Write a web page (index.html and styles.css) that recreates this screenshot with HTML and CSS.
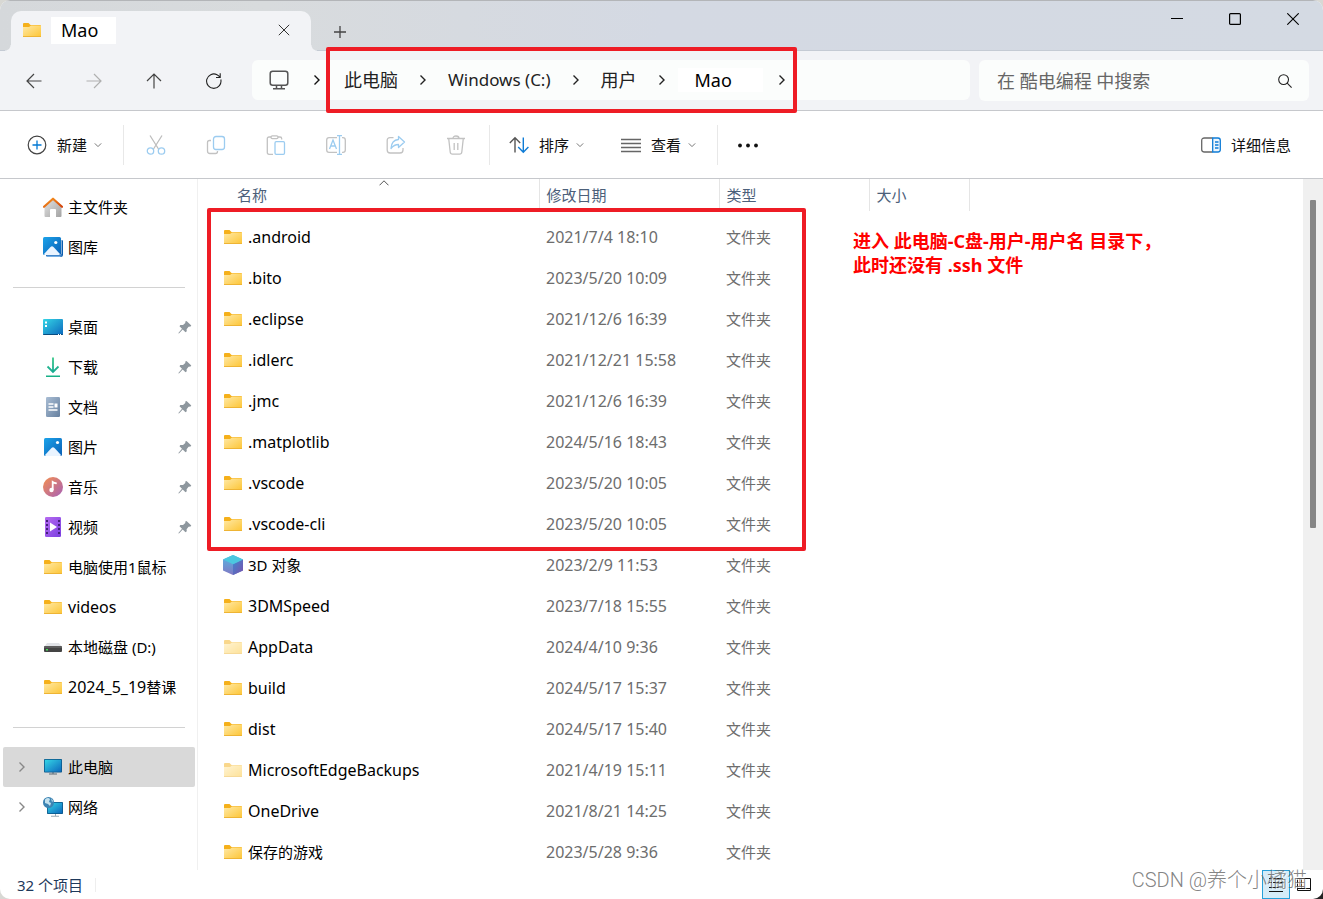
FILE: index.html
```html
<!DOCTYPE html>
<html lang="zh-CN">
<head>
<meta charset="utf-8">
<title>Mao</title>
<link rel="stylesheet" href="styles.css">
</head>
<body>
<svg class="sprite" aria-hidden="true">
  <defs>
    <linearGradient id="g-folder" x1="0" y1="0" x2="1" y2="1"><stop offset="0" stop-color="#ffe9a6"/><stop offset="1" stop-color="#fdc535"/></linearGradient>
    <linearGradient id="g-blue" x1="0" y1="0" x2="1" y2="1"><stop offset="0" stop-color="#1ca3ea"/><stop offset="1" stop-color="#0a5fb5"/></linearGradient>
    <linearGradient id="g-cyan" x1="0" y1="0" x2="1" y2="1"><stop offset="0" stop-color="#35d6e6"/><stop offset="1" stop-color="#0c68bd"/></linearGradient>
    <linearGradient id="g-home" x1="0" y1="0" x2="1" y2="1"><stop offset="0" stop-color="#e4e4e4"/><stop offset="1" stop-color="#a3a3a3"/></linearGradient>
    <linearGradient id="g-roof" x1="0" y1="0" x2="1" y2="1"><stop offset="0" stop-color="#fa9b22"/><stop offset="1" stop-color="#d2420a"/></linearGradient>
    <linearGradient id="g-down" x1="0" y1="0" x2="0" y2="20" gradientUnits="userSpaceOnUse"><stop offset="0" stop-color="#3ac98a"/><stop offset="1" stop-color="#0ea094"/></linearGradient>
    <linearGradient id="g-doc" x1="0" y1="0" x2="1" y2="1"><stop offset="0" stop-color="#a9bdd4"/><stop offset="1" stop-color="#66809f"/></linearGradient>
    <linearGradient id="g-music" x1="0" y1="0" x2="1" y2="1"><stop offset="0" stop-color="#f58f4f"/><stop offset="1" stop-color="#a660b8"/></linearGradient>
    <linearGradient id="g-video" x1="0" y1="0" x2="1" y2="1"><stop offset="0" stop-color="#b66bf0"/><stop offset="1" stop-color="#7a3fe0"/></linearGradient>
    <linearGradient id="g-cube" x1="0" y1="0" x2="0" y2="1"><stop offset="0" stop-color="#55b8e2"/><stop offset="1" stop-color="#8177c4"/></linearGradient>
    <linearGradient id="g-cube2" x1="0" y1="0" x2="1" y2="1"><stop offset="0" stop-color="#3f86cf"/><stop offset="1" stop-color="#7b51ad"/></linearGradient>
  </defs>
  <symbol id="folder" viewBox="0 0 20 20"><path d="M1 4q0-1 1-1h4.500l2 2H18q1 0 1 1v2H1z" fill="#f5b01a"/><path d="M1 7h6l2-1.400h10V16q0 1-1 1H2q-1 0-1-1z" fill="url(#g-folder)"/><path d="M1 16.500h18" stroke="#eeb434" stroke-width="1"/></symbol>
  <symbol id="home" viewBox="0 0 20 20"><path d="M10 1.500 18.500 9v10q0 1-1 1H13v-7q0-1-1-1H8q-1 0-1 1v7H2.500q-1 0-1-1V9z" fill="url(#g-home)"/><path d="M1 9.800 10 1.700l9 8.100" fill="none" stroke="url(#g-roof)" stroke-width="2.200" stroke-linecap="round" stroke-linejoin="round"/></symbol>
  <symbol id="gallery" viewBox="0 0 20 20"><path d="M3 18h14q1.500 0 1.500-1.500V3q1.500 0 1.500 1v13.500q0 2.500-2.500 2.500H5q-2 0-2-2z" fill="#0c5dae"/><path d="M4 20h13l2-1.500H4z" fill="#76aee3"/><rect width="18" height="18" rx="1.500" fill="url(#g-blue)"/><path d="m1 17 6.500-7q1.500-1.500 3 0L17 17q-.5 1-1 1H2q-.5 0-1-1z" fill="#eaf4ff"/><circle cx="12.800" cy="5.500" r="1.600" fill="#fff"/></symbol>
  <symbol id="pictures" viewBox="0 0 20 20"><rect x="1" y="1" width="18" height="18" rx="1.500" fill="url(#g-blue)"/><path d="m2 18 6.500-7q1.500-1.500 3 0L18 18q-.5 1-1 1H3q-.5 0-1-1z" fill="#eaf4ff"/><circle cx="14.500" cy="5.500" r="1.600" fill="#fff"/></symbol>
  <symbol id="desktop" viewBox="0 0 20 20"><rect y="2" width="20" height="16" rx="1" fill="url(#g-cyan)"/><path d="M0 17h20q0 1-1 1H1q-1 0-1-1z" fill="#094d80"/><path d="M2 4.500h2v2H2zm0 3.500h2v2H2z" fill="#fff"/><path d="M15 17.500h1m1 0h1" stroke="#fff"/></symbol>
  <symbol id="download" viewBox="0 0 20 20"><path d="M10 .5v14M4.500 9.500l5.500 5.500 5.500-5.500" fill="none" stroke="url(#g-down)" stroke-width="1.800"/><path d="M3 18.500h14v1.800H3z" fill="#18b087"/></symbol>
  <symbol id="document" viewBox="0 0 20 20"><rect x="3" width="14" height="20" rx="1.300" fill="url(#g-doc)"/><path d="M5.500 7h5m-5 3h5m-5 3h9" stroke="#fff" stroke-width="1.300"/><path d="M11.500 6.500h3v4h-3z" fill="#fff"/></symbol>
  <symbol id="music" viewBox="0 0 20 20"><circle cx="10" cy="10" r="10" fill="url(#g-music)"/><circle cx="8.500" cy="13" r="2.200" fill="#fff"/><path d="M9.700 13V5q2 1.500 4 1.200" fill="none" stroke="#fff" stroke-width="1.800"/></symbol>
  <symbol id="video" viewBox="0 0 20 20"><rect x="2" width="16" height="20" rx="1.300" fill="url(#g-video)"/><path d="M3 3h2v2H3zm0 4h2v2H3zm0 4h2v2H3zm0 4h2v2H3zM15 3h2v2h-2zm0 4h2v2h-2zm0 4h2v2h-2zm0 4h2v2h-2z" fill="#44207a"/><path d="m7 5.500 7 4.500-7 4.500z" fill="#fff"/></symbol>
  <symbol id="disk" viewBox="0 0 20 20"><path d="M4 6h12l3 4H1z" fill="#e1e3e7"/><rect x="1" y="9" width="18" height="6" rx="1" fill="#444"/><path d="M1 10h18" stroke="#777"/><path d="M3 12h2v1.500H3z" fill="#4be05a"/></symbol>
  <symbol id="pc" viewBox="0 0 20 20"><path d="M9 15h2v2H9z" fill="#9aa4ad"/><path d="M6 16.500h8v1H6z" fill="#5b6872"/><rect x="1" y="2" width="18" height="13.500" rx=".8" fill="#0b5789"/><rect x="1.800" y="2.800" width="16.400" height="11.900" fill="url(#g-cyan)"/></symbol>
  <symbol id="network" viewBox="0 0 20 20"><path d="M12 16h1v3h-1zM8 18.800h8v1H8z" fill="#98a8b4"/><rect x="4" y="5" width="16" height="12" rx=".8" fill="#0b5789"/><rect x="4.800" y="5.800" width="14.400" height="10.400" fill="url(#g-cyan)"/><circle cx="5.500" cy="5.500" r="5.500" fill="#3d84b3"/><path d="M2 2.500Q5 0 7 2L6 5l2 1-1 3-2-2L2 6zM8 1l2 3-1 1z" fill="#c4e2ef"/></symbol>
  <symbol id="cube" viewBox="0 0 20 20"><path d="M10 0 20 4.500v11L10 20 0 15.500v-11z" fill="url(#g-cube)"/><path d="m10 9.200 10-4.700v11L10 20z" fill="url(#g-cube2)"/><path d="M10 0 20 4.500 10 9.200 0 4.500z" fill="#4cc7df"/></symbol>
  <symbol id="pin" viewBox="0 0 14 14"><path d="M8.500 1 13.300 5.500 12.600 6.600 10.600 6.700 8.600 9.300 8.800 11.300 7.500 12.200 4.700 9.500 1.200 13.200.4 13.500.6 12.700 4 8.800 1.500 6.300 2.300 5 5 5 7.300 3 7.300 1.500z" fill="#8e979e"/></symbol>
  <symbol id="next" viewBox="0 0 8 12"><path d="m1.500 1.500 4.500 4.500-4.500 4.500" fill="none" stroke="currentColor" stroke-width="1.400"/></symbol>
  <symbol id="caret" viewBox="0 0 8 8"><path d="m.8 2.400 3.200 3.200 3.200-3.200" fill="none" stroke="#777" stroke-width="1"/></symbol>
</svg>

<div class="window">
  <header class="titlebar">
    <div class="tab">
      <svg class="icon"><use href="#folder"/></svg>
      <span class="tab-name">Mao</span>
      <button class="tab-close" aria-label="关闭标签页"><svg width="12" height="12" viewBox="0 0 12 12" fill="none" stroke="#333"><path d="m.8.8 10.400 10.400m0-10.400L.8 11.200"/></svg></button>
    </div>
    <button class="tab-add" aria-label="新标签页"><svg width="12" height="12" viewBox="0 0 12 12" fill="none" stroke="#444" stroke-width="1.300"><path d="M6 0v12M0 6h12"/></svg></button>
    <div class="window-buttons">
      <button aria-label="最小化"><svg width="12" height="12" viewBox="0 0 12 12" stroke="#000"><path d="M0 5.500h12"/></svg></button>
      <button aria-label="最大化"><svg width="12" height="12" viewBox="0 0 12 12" fill="none" stroke="#000" stroke-width="1.200"><rect x=".6" y=".6" width="10.800" height="10.800" rx="1"/></svg></button>
      <button aria-label="关闭"><svg width="12" height="12" viewBox="0 0 12 12" stroke="#000" stroke-width="1.100"><path d="m.3.3 11.400 11.400m0-11.400L.3 11.700"/></svg></button>
    </div>
  </header>

  <nav class="navbar" aria-label="地址">
    <button class="square" aria-label="后退"><svg width="16" height="16" viewBox="0 0 16 16" fill="none" stroke="#444" stroke-width="1.200"><path d="M15.500 8H1m7-7L1 8l7 7"/></svg></button>
    <button class="square" aria-label="前进"><svg width="16" height="16" viewBox="0 0 16 16" fill="none" stroke="#b0b0b0" stroke-width="1.200"><path d="M.5 8H15M8 1l7 7-7 7"/></svg></button>
    <button class="square" aria-label="向上"><svg width="16" height="16" viewBox="0 0 16 16" fill="none" stroke="#444" stroke-width="1.200"><path d="M8 15.500V1M1 8l7-7 7 7"/></svg></button>
    <button class="square" aria-label="刷新"><svg width="16" height="16" viewBox="0 0 16 16" fill="none" stroke="#222" stroke-width="1.100"><path d="M14.800 6.500A7.200 7.200 0 1 1 11 1.700q2 1 3 2.700M14.200.3v4.200H10"/></svg></button>
    <div class="address">
      <button class="location" aria-label="位置"><svg width="20" height="20" viewBox="0 0 20 20" fill="none" stroke="#555" stroke-width="1.500"><rect x="1.200" y="1.200" width="17.600" height="14" rx="2.500"/><path d="M7.500 15.500v3m5-3v3M4 18.700h12"/></svg></button>
      <svg class="next"><use href="#next"/></svg>
      <div class="crumbs">
        <a href="#">此电脑</a><svg class="next"><use href="#next"/></svg>
        <a href="#" class="drive">Windows (C:)</a><svg class="next"><use href="#next"/></svg>
        <a href="#">用户</a><svg class="next"><use href="#next"/></svg>
        <a href="#" class="current">Mao</a><svg class="next last"><use href="#next"/></svg>
      </div>
    </div>
    <label class="search">
      <input type="text" aria-label="搜索" placeholder="在 酷电编程 中搜索">
      <svg width="14" height="14" viewBox="0 0 14 14" fill="none" stroke="#222" stroke-width="1.100"><circle cx="5.600" cy="5.600" r="4.900"/><path d="m9.200 9.200 4.400 4.400"/></svg>
    </label>
  </nav>

  <div class="toolbar">
    <button class="tool new"><svg class="icon" viewBox="0 0 20 20" fill="none"><circle cx="10" cy="10" r="8.800" stroke="#444" stroke-width="1.200"/><path d="M10 5.500v9M5.500 10h9" stroke="#0078d4" stroke-width="1.300"/></svg>新建<svg class="caret"><use href="#caret"/></svg></button>
    <div class="edit-tools">
      <button class="square" aria-label="剪切"><svg class="icon" viewBox="0 0 20 20" fill="none" stroke-width="1.300"><path d="M4 .5 12.500 14M16 .5 7.500 14" stroke="#bdbdbd"/><circle cx="4.500" cy="16" r="3.200" stroke="#9cccf0"/><circle cx="15.500" cy="16" r="3.200" stroke="#9cccf0"/></svg></button>
      <button class="square" aria-label="复制"><svg class="icon" viewBox="0 0 20 20" fill="none" stroke-width="1.300"><path d="M5 5.500H3.500q-2 0-2 2V16q0 2.500 2.500 2.500h5.500q2 0 2-2V16" stroke="#c2c2c2"/><rect x="7.500" y="1.500" width="11" height="13" rx="2.500" stroke="#9cccf0"/></svg></button>
      <button class="square" aria-label="粘贴"><svg class="icon" viewBox="0 0 20 20" fill="none" stroke-width="1.300"><path d="M7 19.300H3q-1.700 0-1.700-1.700V3.500Q1.300 2 3 2h2m7 0h2q1.700 0 1.700 1.700v.8" stroke="#c2c2c2"/><rect x="5" y=".8" width="7" height="2.800" rx="1.300" stroke="#c2c2c2"/><rect x="9" y="6.700" width="9.500" height="12.600" rx="1.200" stroke="#9cccf0"/></svg></button>
      <button class="square" aria-label="重命名"><svg class="icon" viewBox="0 0 20 20" fill="none" stroke-width="1.300"><path d="M11 2.700H3Q.7 2.700.7 5v10q0 2.300 2.300 2.300h8M16 2.700h1q2.300 0 2.300 2.300v10q0 2.300-2.300 2.300h-1" stroke="#c2c2c2"/><path d="m3.500 14 3.500-9 3.500 9M4.800 11h4.500M11 .7h5M11 19.300h5M13.500.7v18.600" stroke="#9cccf0"/></svg></button>
      <button class="square" aria-label="共享"><svg class="icon" viewBox="0 0 20 20" fill="none" stroke-width="1.300" stroke-linejoin="round"><path d="M7.500 2.700H4Q1.200 2.700 1.200 5.500V15q0 3 3 3H14q3 0 3-3v-2" stroke="#c2c2c2"/><path d="M12.500 1.500 18.500 7l-6 5.500V9.500Q8 9.500 5 13.500 5.500 5 12.500 4.500z" stroke="#9cccf0"/></svg></button>
      <button class="square" aria-label="删除"><svg class="icon" viewBox="0 0 20 20" fill="none" stroke="#c2c2c2" stroke-width="1.300"><path d="M1 3.500h18M7 3.500q0-2.500 3-2.500t3 2.500M2.700 3.500 4.200 17q.2 2.200 2.300 2.200h7q2.100 0 2.300-2.200l1.500-13.500M8.200 8v7m3.600-7v7"/></svg></button>
    </div>
    <button class="tool sort"><svg class="icon" viewBox="0 0 20 20" fill="none" stroke-width="1.400"><path d="M6 17.500V3M.8 8 6 2.800 11.200 8" stroke="#555"/><path d="M14.300 2.500V17M9.200 12l5.100 5.200 5.100-5.200" stroke="#0f7cd6"/></svg>排序<svg class="caret"><use href="#caret"/></svg></button>
    <button class="tool view"><svg class="icon" viewBox="0 0 20 20" stroke="#666" stroke-width="1.300"><path d="M0 4.500h20M0 8.500h20M0 12.500h20M0 16.500h20"/></svg>查看<svg class="caret"><use href="#caret"/></svg></button>
    <button class="square" aria-label="更多"><svg class="icon" viewBox="0 0 20 20" fill="#111"><circle cx="2" cy="10.500" r="1.900"/><circle cx="10" cy="10.500" r="1.900"/><circle cx="18" cy="10.500" r="1.900"/></svg></button>
    <button class="tool details"><svg class="icon" viewBox="0 0 20 20" fill="none" stroke-width="1.300"><path d="M11.500 3H3.500Q.7 3 .7 5.500v9Q.7 17 3.500 17h8" stroke="#666"/><path d="M11.700 3H17q2.300 0 2.300 2.500v9q0 2.500-2.300 2.500h-5.300zM14 7h3.500M14 10h3.500M14 13h3.500" fill="#eef6fd" stroke="#0f7cd6"/></svg>详细信息</button>
  </div>

  <div class="content">
    <aside class="sidebar">
      <a href="#"><svg class="icon"><use href="#home"/></svg>主文件夹</a>
      <a href="#"><svg class="icon"><use href="#gallery"/></svg>图库</a>
      <hr>
      <a href="#"><svg class="icon"><use href="#desktop"/></svg>桌面<svg class="pin"><use href="#pin"/></svg></a>
      <a href="#"><svg class="icon"><use href="#download"/></svg>下载<svg class="pin"><use href="#pin"/></svg></a>
      <a href="#"><svg class="icon"><use href="#document"/></svg>文档<svg class="pin"><use href="#pin"/></svg></a>
      <a href="#"><svg class="icon"><use href="#pictures"/></svg>图片<svg class="pin"><use href="#pin"/></svg></a>
      <a href="#"><svg class="icon"><use href="#music"/></svg>音乐<svg class="pin"><use href="#pin"/></svg></a>
      <a href="#"><svg class="icon"><use href="#video"/></svg>视频<svg class="pin"><use href="#pin"/></svg></a>
      <a href="#"><svg class="icon"><use href="#folder"/></svg>电脑使用1鼠标</a>
      <a href="#"><svg class="icon"><use href="#folder"/></svg><span class="latin">videos</span></a>
      <a href="#"><svg class="icon"><use href="#disk"/></svg>本地磁盘 (D:)</a>
      <a href="#"><svg class="icon"><use href="#folder"/></svg><span><span class="latin">2024_5_19</span>替课</span></a>
      <hr>
      <a href="#" class="expandable selected"><svg class="next"><use href="#next"/></svg><svg class="icon"><use href="#pc"/></svg>此电脑</a>
      <a href="#" class="expandable"><svg class="next"><use href="#next"/></svg><svg class="icon"><use href="#network"/></svg>网络</a>
    </aside>

    <main class="files">
      <table>
        <colgroup><col class="c-name"><col class="c-date"><col class="c-type"><col class="c-size"></colgroup>
        <thead><tr><th>名称<svg class="sorted" width="10" height="6" viewBox="0 0 10 6" fill="none" stroke="#555"><path d="m.5 5.300 4.500-4.500 4.500 4.500"/></svg></th><th>修改日期</th><th>类型</th><th>大小</th></tr></thead>
        <tbody>
          <tr><td><svg class="icon"><use href="#folder"/></svg><span class="latin">.android</span></td><td>2021/7/4 18:10</td><td>文件夹</td><td></td></tr>
          <tr><td><svg class="icon"><use href="#folder"/></svg><span class="latin">.bito</span></td><td>2023/5/20 10:09</td><td>文件夹</td><td></td></tr>
          <tr><td><svg class="icon"><use href="#folder"/></svg><span class="latin">.eclipse</span></td><td>2021/12/6 16:39</td><td>文件夹</td><td></td></tr>
          <tr><td><svg class="icon"><use href="#folder"/></svg><span class="latin">.idlerc</span></td><td>2021/12/21 15:58</td><td>文件夹</td><td></td></tr>
          <tr><td><svg class="icon"><use href="#folder"/></svg><span class="latin">.jmc</span></td><td>2021/12/6 16:39</td><td>文件夹</td><td></td></tr>
          <tr><td><svg class="icon"><use href="#folder"/></svg><span class="latin">.matplotlib</span></td><td>2024/5/16 18:43</td><td>文件夹</td><td></td></tr>
          <tr><td><svg class="icon"><use href="#folder"/></svg><span class="latin">.vscode</span></td><td>2023/5/20 10:05</td><td>文件夹</td><td></td></tr>
          <tr><td><svg class="icon"><use href="#folder"/></svg><span class="latin">.vscode-cli</span></td><td>2023/5/20 10:05</td><td>文件夹</td><td></td></tr>
          <tr><td><svg class="icon"><use href="#cube"/></svg>3D 对象</td><td>2023/2/9 11:53</td><td>文件夹</td><td></td></tr>
          <tr><td><svg class="icon"><use href="#folder"/></svg><span class="latin">3DMSpeed</span></td><td>2023/7/18 15:55</td><td>文件夹</td><td></td></tr>
          <tr class="hidden-item"><td><svg class="icon"><use href="#folder"/></svg><span class="latin">AppData</span></td><td>2024/4/10 9:36</td><td>文件夹</td><td></td></tr>
          <tr><td><svg class="icon"><use href="#folder"/></svg><span class="latin">build</span></td><td>2024/5/17 15:37</td><td>文件夹</td><td></td></tr>
          <tr><td><svg class="icon"><use href="#folder"/></svg><span class="latin">dist</span></td><td>2024/5/17 15:40</td><td>文件夹</td><td></td></tr>
          <tr class="hidden-item"><td><svg class="icon"><use href="#folder"/></svg><span class="latin">MicrosoftEdgeBackups</span></td><td>2021/4/19 15:11</td><td>文件夹</td><td></td></tr>
          <tr><td><svg class="icon"><use href="#folder"/></svg><span class="latin">OneDrive</span></td><td>2021/8/21 14:25</td><td>文件夹</td><td></td></tr>
          <tr><td><svg class="icon"><use href="#folder"/></svg>保存的游戏</td><td>2023/5/28 9:36</td><td>文件夹</td><td></td></tr>
        </tbody>
      </table>
      <div class="highlight"></div>
      <p class="note">进入 此电脑-C盘-用户-用户名 目录下，<br>此时还没有 .ssh 文件</p>
    </main>
    <div class="scrollbar"><div class="thumb"></div></div>
  </div>

  <footer class="status">
    <span class="count">32 个项目</span>
    <div class="modes">
      <button class="on" aria-label="详细信息视图"><svg width="16" height="16" viewBox="0 0 16 16" stroke="#111"><path d="M1 1.500h3m1 0h10M1 5.500h3m1 0h10M1 10.500h14M1 14.500h14"/></svg></button>
      <button aria-label="大图标视图"><svg width="16" height="16" viewBox="0 0 16 16" fill="none" stroke="#111"><path d="M1.500 1.500h13v12h-13zM5.500 1.500v10M1.500 11.500h13"/></svg></button>
    </div>
    <span class="watermark">CSDN @养个小橘猫</span>
  </footer>
</div>
</body>
</html>
```

FILE: styles.css
```css
* { box-sizing: border-box; }

body {
  margin: 0;
  background: linear-gradient(135deg, #d8d8d4 60%, #222 100%);
  font: 15px/20px "Noto Sans", "Noto Sans CJK SC", sans-serif;
  color: #111;
}

button {
  display: flex;
  align-items: center;
  justify-content: center;
  padding: 0;
  border: 0;
  background: none;
  font: inherit;
  color: inherit;
}

a { color: inherit; text-decoration: none; }
svg { display: block; flex: none; }
.sprite { position: absolute; width: 0; height: 0; }
.icon { width: 20px; height: 20px; }
.next { width: 8px; height: 12px; }
.caret { width: 8px; height: 8px; }
.square { width: 60px; align-self: stretch; }
.latin { font-size: 16px; }

.window {
  display: flex;
  flex-direction: column;
  height: 100vh;
  overflow: hidden;
  border-radius: 10px;
  background: #fff;
}

/* Title bar */
.titlebar {
  display: flex;
  align-items: flex-end;
  flex: none;
  height: 51px;
  padding: 0 1px 0 11px;
  border-top: 1px solid #b3b5b8;
  background: linear-gradient(90deg, #d5d8db, #d8dbdd 20%, #d4d9e3 50%, #d4dae3);
  box-shadow: inset 0 -1px #c5cbd4;
}

.tab {
  position: relative;
  display: flex;
  align-items: center;
  width: 300px;
  height: 40px;
  padding: 0 21px 2px 11px;
  border-radius: 10px 10px 0 0;
  background: #f2f3f6;
}

.tab::before, .tab::after {
  content: "";
  position: absolute;
  bottom: 0;
  width: 6px;
  height: 6px;
}
.tab::before { right: 100%; background: radial-gradient(circle at 0 0, transparent 5px, #f2f3f6 6px); }
.tab::after { left: 100%; background: radial-gradient(circle at 100% 0, transparent 5px, #f2f3f6 6px); }

.tab-name {
  margin-left: 9px;
  padding: 0 18px 0 10px;
  background: #fff;
  font-size: 18px;
  line-height: 27px;
  color: #000;
}

.tab-close { margin-left: auto; }
.tab-add { width: 58px; height: 38px; }
.window-buttons { display: flex; align-self: flex-start; margin-left: auto; }
.window-buttons button { width: 58px; height: 36px; }

/* Navigation */
.navbar {
  display: flex;
  align-items: flex-start;
  flex: none;
  padding: 9px 14px 9px 4px;
  border-bottom: 1px solid #c6c8cc;
  background: #f2f3f6;
  font-size: 18px;
}

.address {
  display: flex;
  align-items: center;
  flex: 1;
  height: 40px;
  margin: 0 9px 0 8px;
  padding-left: 17px;
  border-radius: 6px;
  background: #fbfdfc;
}

.location { margin-right: 24px; }

.crumbs {
  position: relative;
  display: flex;
  align-items: center;
  align-self: stretch;
  margin-left: 5px;
  padding-left: 18px;
  color: #222;
  white-space: nowrap;
}
.crumbs::after {
  content: "";
  position: absolute;
  inset: -13px 0;
  border: 4px solid #ee1c25;
  border-radius: 2px;
}
.crumbs .next { margin: 0 21px; }
.crumbs .last { margin: 0 11px 0 15px; }
.drive { font-size: 17px; }
.current {
  margin-left: -9px;
  padding: 0 31px 0 17px;
  background: #fff;
  line-height: 24px;
  color: #000;
}

.search {
  display: flex;
  align-items: center;
  width: 330px;
  height: 41px;
  padding: 0 17px 0 18px;
  border-radius: 6px;
  background: #fbfdfc;
}
.search input {
  flex: 1;
  min-width: 0;
  padding: 0;
  border: 0;
  outline: 0;
  background: none;
  font: inherit;
}
.search input::placeholder { color: #666; opacity: 1; }

/* Toolbar */
.toolbar {
  display: flex;
  align-items: center;
  flex: none;
  height: 68px;
  border-bottom: 1px solid #c6c8cc;
}
.tool { height: 40px; gap: 10px; }
.tool .caret { margin-left: -3px; }
.new { padding: 0 21px 0 27px; }
.edit-tools {
  display: flex;
  height: 40px;
  padding: 0 3px 0 2px;
  border: solid #e8e8e8;
  border-width: 0 1px;
}
.sort { padding-left: 19px; }
.view { padding: 0 21px 0 37px; border-right: 1px solid #e8e8e8; }
.details { margin: 0 32px 0 auto; }

/* Content */
.content { display: flex; flex: 1; min-height: 0; overflow: hidden; }

.sidebar {
  flex: none;
  width: 198px;
  padding: 8px 2px 0 3px;
  border-right: 1px solid #f0f0f0;
  color: #000;
}
.sidebar a {
  display: flex;
  align-items: center;
  gap: 5px;
  height: 40px;
  padding: 0 3px 0 40px;
  border-radius: 2px;
  white-space: nowrap;
}
.sidebar hr {
  height: 1px;
  margin: 20px 10px 19px;
  border: 0;
  background: #d2d2d2;
}
.sidebar .pin { width: 14px; height: 14px; margin-left: auto; }
.sidebar .expandable { padding-left: 15px; }
.expandable .next { margin-right: 12px; color: #888; }
.sidebar .selected { background: #d9d9d9; }

.files { position: relative; flex: 1; min-width: 0; }
.files table { width: 771px; border-collapse: collapse; table-layout: fixed; }
.c-name { width: 341px; }
.c-date { width: 180px; }
.c-type { width: 150px; }
.c-size { width: 100px; }

.files th {
  position: relative;
  height: 32px;
  padding: 0 7px;
  border-right: 1px solid #e5e5e5;
  font-weight: 400;
  text-align: left;
  color: #4c607a;
}
.files th:first-child { padding-left: 39px; }
.sorted { position: absolute; top: 1px; right: 150px; }
.files thead::after { content: ""; display: block; height: 5px; }

.files td { height: 41px; padding: 0 7px; color: #6d6d6d; }
.files td:first-child {
  display: flex;
  align-items: center;
  gap: 5px;
  padding-left: 25px;
  color: #000;
}
.files td:nth-child(2) { font-size: 16px; }
.hidden-item .icon { opacity: .5; }

.highlight {
  position: absolute;
  top: 29px;
  left: 9px;
  width: 599px;
  height: 343px;
  border: 4px solid #ee1c25;
  border-radius: 2px;
}

.note {
  position: absolute;
  top: 50px;
  left: 655px;
  margin: 0;
  font-size: 18px;
  font-weight: 700;
  line-height: 24px;
  color: #f00;
}

.scrollbar { flex: none; width: 20px; padding-top: 21px; background: #f0f0f0; }
.thumb { width: 6px; height: 49%; margin-left: 7px; border-radius: 1px; background: #868686; }

/* Status bar */
.status {
  position: relative;
  display: flex;
  align-items: center;
  flex: none;
  height: 29px;
  padding-left: 17px;
  color: #1e395b;
}
.count { padding-right: 12px; border-right: 1px solid #eee; line-height: 14px; }
.modes { display: flex; align-self: stretch; margin: 0 5px 0 auto; }
.modes button { width: 28px; border: 1px solid transparent; }
.modes .on { border-color: #26a0da; background: #d5ecf8; }

.watermark {
  position: absolute;
  right: 16px;
  bottom: 6px;
  font-family: Roboto, "Noto Sans CJK SC", sans-serif;
  font-size: 20px;
  font-weight: 300;
  line-height: 26px;
  color: rgba(100, 100, 100, .8);
  text-shadow: 1px 1px rgba(255, 255, 255, .7);
}
```
